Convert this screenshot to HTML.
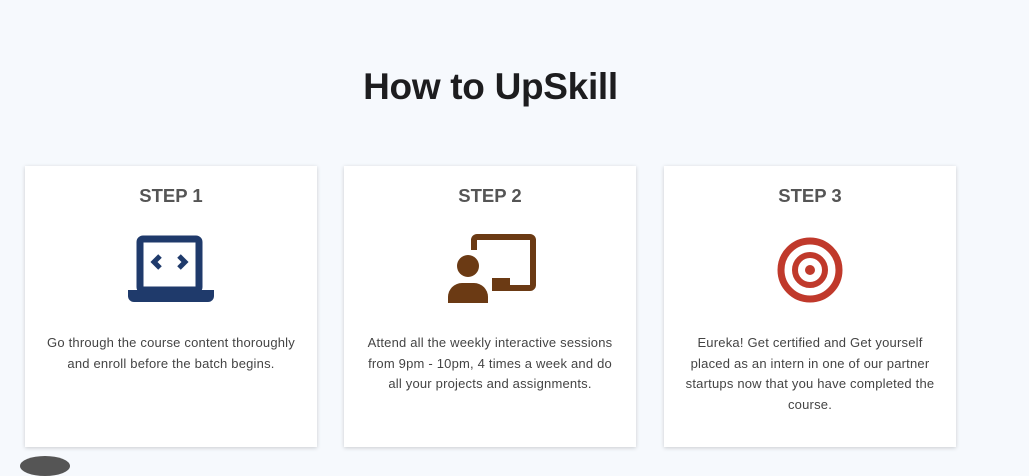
<!DOCTYPE html>
<html><head><style>
body{margin:0;width:1029px;height:461px;background:#f6f9fd;font-family:"Liberation Sans",Roboto,sans-serif;position:relative;overflow:hidden}
h1{position:absolute;top:66px;left:0;width:981px;text-align:center;margin:0;font-size:37px;font-weight:bold;color:#1d1d1f;letter-spacing:-0.3px}
.card{position:absolute;top:166px;width:292px;height:281px;background:#fff;box-shadow:0 1px 4px rgba(0,0,0,.18)}
.card h2{margin:0;position:absolute;top:19px;width:100%;text-align:center;font-size:18.5px;font-weight:bold;color:#555}
.card p{position:absolute;top:167px;left:0;right:0;margin:0;text-align:center;font-size:13px;letter-spacing:0.2px;line-height:20.5px;color:#444;white-space:nowrap}
svg{position:absolute;top:0;left:0}
.dot{position:absolute;left:20px;top:456px;width:50px;height:20px;border-radius:50%;background:#555}
</style></head><body>
<h1>How to UpSkill</h1>
<div class="card" style="left:25px"><h2>STEP 1</h2>
<svg width="292" height="281"><rect x="115" y="73" width="59" height="51" rx="3" fill="none" stroke="#1f3a6b" stroke-width="7"/><path d="M103 124h86v6a6 6 0 0 1-6 6h-74a6 6 0 0 1-6-6z" fill="#1f3a6b"/><path d="M135 90l-6 6 6 6M154 90l6 6-6 6" fill="none" stroke="#1f3a6b" stroke-width="5"/></svg>
<p>Go through the course content thoroughly<br>and enroll before the batch begins.</p></div>
<div class="card" style="left:344px"><h2>STEP 2</h2>
<svg width="292" height="281"><path d="M130 84v-10a3 3 0 0 1 3-3h53a3 3 0 0 1 3 3v45a3 3 0 0 1-3 3h-38" fill="none" stroke="#6b3a14" stroke-width="6"/><rect x="148" y="112" width="18" height="10" fill="#6b3a14"/><circle cx="124" cy="100" r="11" fill="#6b3a14"/><path d="M104 137v-6a14 14 0 0 1 14-14h12a14 14 0 0 1 14 14v6z" fill="#6b3a14"/></svg>
<p>Attend all the weekly interactive sessions<br>from 9pm - 10pm, 4 times a week and do<br>all your projects and assignments.</p></div>
<div class="card" style="left:664px"><h2>STEP 3</h2>
<svg width="292" height="281"><circle cx="146" cy="104" r="29" fill="none" stroke="#c0392b" stroke-width="7"/><circle cx="146" cy="104" r="15" fill="none" stroke="#c0392b" stroke-width="6"/><circle cx="146" cy="104" r="5" fill="#c0392b"/></svg>
<p>Eureka! Get certified and Get yourself<br>placed as an intern in one of our partner<br>startups now that you have completed the<br>course.</p></div>
<div class="dot"></div>
</body></html>
